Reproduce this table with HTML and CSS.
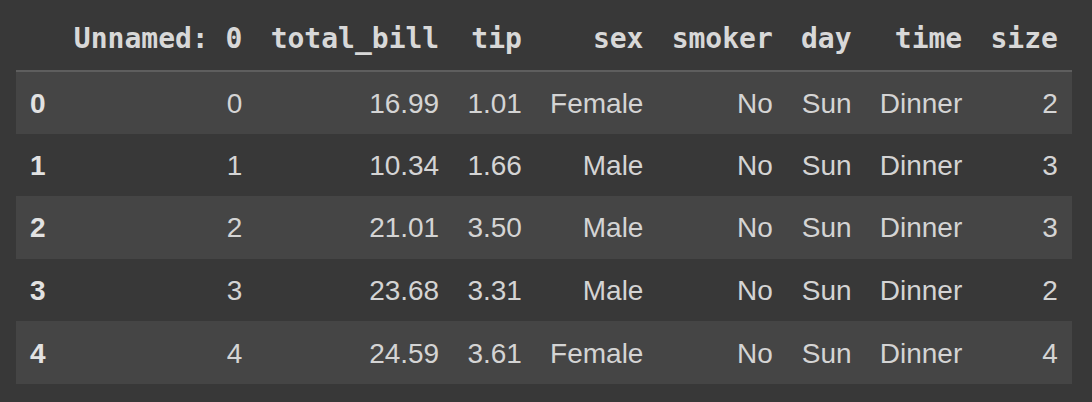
FILE: index.html
```html
<!DOCTYPE html>
<html>
<head>
<meta charset="utf-8">
<link rel="stylesheet" href="styles.css">
</head>
<body>
<table class="df">
  <thead>
    <tr>
      <th class="idx-head"></th>
      <th>Unnamed: 0</th>
      <th>total_bill</th>
      <th>tip</th>
      <th>sex</th>
      <th>smoker</th>
      <th>day</th>
      <th>time</th>
      <th>size</th>
    </tr>
  </thead>
  <tbody>
    <tr class="stripe">
      <th class="idx">0</th><td>0</td><td>16.99</td><td>1.01</td><td>Female</td><td>No</td><td>Sun</td><td>Dinner</td><td>2</td>
    </tr>
    <tr>
      <th class="idx">1</th><td>1</td><td>10.34</td><td>1.66</td><td>Male</td><td>No</td><td>Sun</td><td>Dinner</td><td>3</td>
    </tr>
    <tr class="stripe">
      <th class="idx">2</th><td>2</td><td>21.01</td><td>3.50</td><td>Male</td><td>No</td><td>Sun</td><td>Dinner</td><td>3</td>
    </tr>
    <tr>
      <th class="idx">3</th><td>3</td><td>23.68</td><td>3.31</td><td>Male</td><td>No</td><td>Sun</td><td>Dinner</td><td>2</td>
    </tr>
    <tr class="stripe">
      <th class="idx">4</th><td>4</td><td>24.59</td><td>3.61</td><td>Female</td><td>No</td><td>Sun</td><td>Dinner</td><td>4</td>
    </tr>
  </tbody>
</table>
</body>
</html>
```

FILE: styles.css
```css
html, body {
  margin: 0;
  padding: 0;
  background: #383838;
}

body {
  padding-left: 16px;
}

.df {
  border-collapse: collapse;
  border-spacing: 0;
  font-family: "Liberation Sans", Arial, sans-serif;
  font-size: 28px;
  color: #d4d4d4;
}

.df thead th {
  font-family: "DejaVu Sans Mono", monospace;
  font-weight: bold;
  font-size: 28px;
  color: #d8d8d8;
  text-align: right;
  height: 71px;
  padding: 7px 14.1px 0 14.1px;
  box-sizing: border-box;
  vertical-align: middle;
  line-height: 32px;
  border-bottom: 2px solid #5e5e5e;
  white-space: nowrap;
}

.df td,
.df tbody th {
  height: 62.6px;
  padding: 2px 14.1px 0 14.1px;
  box-sizing: border-box;
  text-align: right;
  vertical-align: middle;
  line-height: 32px;
  white-space: nowrap;
}

.df tbody th.idx {
  text-align: left;
  font-weight: bold;
  color: #e2e2e2;
}

.df tr.stripe {
  background: #454545;
}
```
